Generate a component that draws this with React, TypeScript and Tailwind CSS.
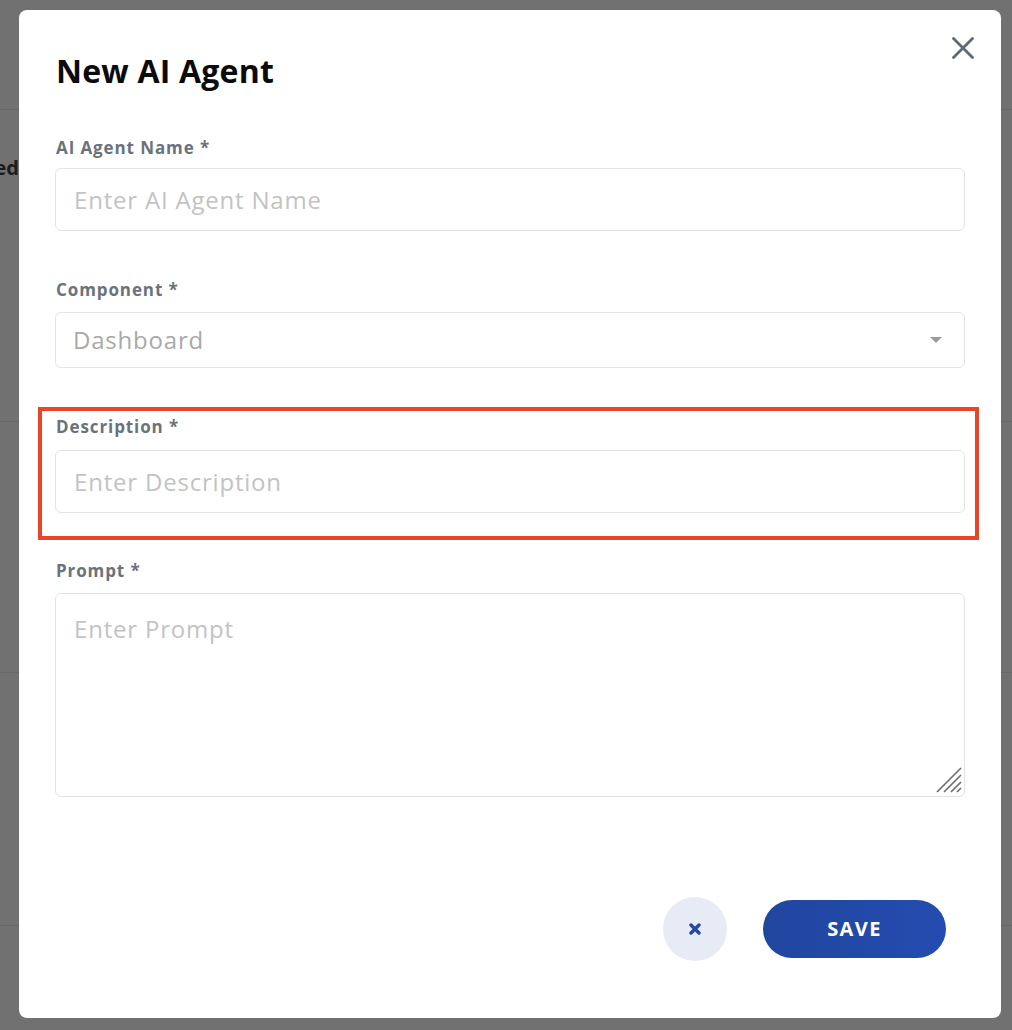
import React from 'react';

// Background page (dimmed by the modal overlay)
const bgRows = [
  {
    h: 312,
    left: 'Completed',
    leftPt: 'pt-[46px]',
    pt: 'pt-[152px]',
    lines: [
      'The agent can answer student questions in',
      'real time and help them work through their',
      'assignments step by step, guided by the',
      'course material it was given, and a lot more',
    ],
  },
  {
    h: 251,
    left: '',
    leftPt: '',
    pt: 'pt-[23px]',
    lines: [
      'It keeps track of how You are doing and',
      'points out the right thing to review next,',
      'with short tips that fit the lesson at hand',
      'and follows up on the topics you found',
      'difficult, so every review session you',
      'start is focused on the things that matter',
    ],
  },
  {
    h: 253,
    left: '',
    leftPt: '',
    pt: 'pt-[25px]',
    lines: [
      'Teachers can set up how the agent will work',
      'and what it may answer, which materials',
      "are used and when it's allowed to reply",
      'on its own, without anyone in between',
      'and what it says to students when they ask',
    ],
  },
  {
    h: 222,
    left: '',
    leftPt: '',
    pt: 'pt-[24px]',
    lines: [
      'Each agent keeps a history of everything you',
      'ask it and the answers it gave, all together',
      'for the instructor and educational leader of',
    ],
  },
];

function BackgroundPage() {
  return (
    <div className="flex flex-col font-['Open_Sans',sans-serif] text-[20px] leading-[35px] text-[#333333]">
      <div className="h-[110px] border-b border-[#686868]" />
      {bgRows.map((row, i) => (
        <div
          key={i}
          className="flex border-b border-[#686868] overflow-hidden"
          style={{ height: row.h }}
        >
          <div className={`w-[19px] shrink-0 overflow-hidden flex justify-end ${row.leftPt}`}>
            <span className="whitespace-nowrap font-bold text-[20px] leading-[24px] text-[#1c1c1c]">
              {row.left}
            </span>
          </div>
          <div className="w-[531px] shrink-0" />
          <div className={`flex-1 min-w-0 overflow-hidden whitespace-nowrap ${row.pt}`}>
            {row.lines.map((l, j) => (
              <div key={j}>{l}</div>
            ))}
          </div>
        </div>
      ))}
    </div>
  );
}

const labelCls = 'block text-[17px] leading-[22px] font-bold tracking-[0.9px] text-[#6a737b]';
const inputCls =
  'block w-full h-[63px] rounded-[6px] border border-[#e3e3e3] bg-white px-[18px] text-[24px] tracking-[0.8px] text-[#333] placeholder:text-[#c3c3c3] outline-none';

function CloseIcon() {
  return (
    <svg width="22" height="22" viewBox="0 0 22 22" fill="none">
      <path d="M1.5 1.5L20.5 20.5M20.5 1.5L1.5 20.5" stroke="#5e6a71" strokeWidth="2.8" strokeLinecap="round" />
    </svg>
  );
}

function ResizeGrip() {
  return (
    <svg width="26" height="26" viewBox="0 0 26 26" fill="none" className="absolute right-[3px] bottom-[4px] pointer-events-none">
      <path d="M1 25L25 1M8 25L25 8M15 25L25 15M21 25L25 21" stroke="#6b6b6b" strokeWidth="1.6" />
    </svg>
  );
}

export default function App() {
  return (
    <div className="relative h-[1030px] w-full overflow-hidden bg-[#717171]">
      <BackgroundPage />

      {/* Modal */}
      <div className="absolute left-[19px] top-[10px] w-[982px] h-[1008px] rounded-[8px] bg-white font-['Open_Sans',sans-serif]">
        <button className="absolute top-[27px] right-[27px]" aria-label="Close">
          <CloseIcon />
        </button>

        <div className="px-[36px] pt-[42px]">
          <h2 className="pl-[1px] text-[32px] leading-[38px] font-bold tracking-[0.2px] text-[#0b0b0b]">New AI Agent</h2>

          <div className="mt-[47px]">
            <label className={`${labelCls} pl-[1px]`}>AI Agent Name *</label>
            <input className={`${inputCls} mt-[9px]`} placeholder="Enter AI Agent Name" />
          </div>

          <div className="mt-[48px]">
            <label className={`${labelCls} pl-[1px]`}>Component *</label>
            <div className="mt-[11px] flex h-[56px] items-center justify-between rounded-[6px] border border-[#e3e3e3] pl-[17px] pr-[22px]">
              <span className="text-[24px] tracking-[0.8px] text-[#a9a9a9]">Dashboard</span>
              <svg width="12" height="6" viewBox="0 0 12 6">
                <path d="M0 0H12L6 6Z" fill="#9b9b9b" />
              </svg>
            </div>
          </div>

          <div className="relative mt-[48px]">
            {/* highlight annotation */}
            <div className="absolute -left-[17px] -right-[14px] -top-[9px] -bottom-[27px] border-[4px] border-[#e8462b] pointer-events-none" />
            <label className={`${labelCls} pl-[1px]`}>Description *</label>
            <input className={`${inputCls} mt-[12px]`} placeholder="Enter Description" />
          </div>

          <div className="mt-[47px]">
            <label className={`${labelCls} pl-[1px]`}>Prompt *</label>
            <div className="relative mt-[11px]">
              <textarea
                className="block w-full h-[204px] resize-none rounded-[6px] border border-[#e3e3e3] px-[18px] pt-[20px] text-[24px] leading-[30px] tracking-[0.8px] text-[#333] placeholder:text-[#c3c3c3] outline-none"
                placeholder="Enter Prompt"
              />
              <ResizeGrip />
            </div>
          </div>
        </div>

        <div className="mt-[100px] flex items-center justify-end gap-[36px] pr-[55px]">
          <button className="flex h-[64px] w-[64px] items-center justify-center rounded-full bg-[#e7ebf6]" aria-label="Cancel">
            <svg width="12" height="12" viewBox="0 0 12 12" fill="none">
              <path d="M2 2L10 10M10 2L2 10" stroke="#2347a3" strokeWidth="3.4" strokeLinecap="round" />
            </svg>
          </button>
          <button className="h-[58px] w-[183px] rounded-full bg-gradient-to-r from-[#21469f] to-[#244cb0] text-[20px] font-bold tracking-[1.4px] text-white">
            SAVE
          </button>
        </div>
      </div>
    </div>
  );
}
